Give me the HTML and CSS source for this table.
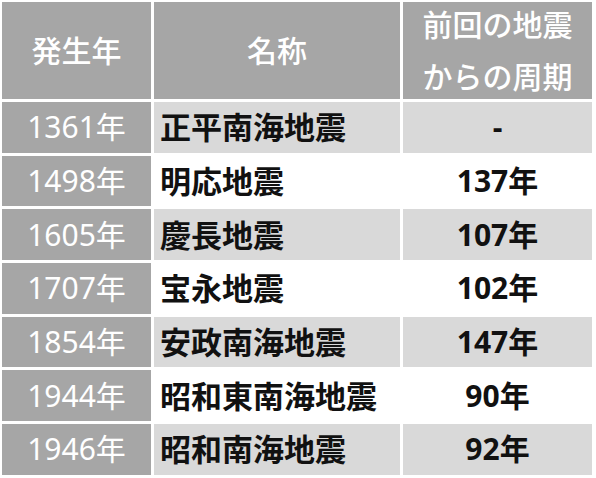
FILE: index.html
```html
<!DOCTYPE html>
<html lang="ja">
<head>
<meta charset="utf-8">
<title>南海地震</title>
<link rel="stylesheet" href="styles.css">
</head>
<body>
<div class="table">
  <div class="cell head">発生年</div>
  <div class="cell head">名称</div>
  <div class="cell head wrap">前回の地震<br>からの周期</div>

  <div class="cell year">1361年</div>
  <div class="cell name shade">正平南海地震</div>
  <div class="cell period shade">-</div>

  <div class="cell year">1498年</div>
  <div class="cell name">明応地震</div>
  <div class="cell period">137年</div>

  <div class="cell year">1605年</div>
  <div class="cell name shade">慶長地震</div>
  <div class="cell period shade">107年</div>

  <div class="cell year">1707年</div>
  <div class="cell name">宝永地震</div>
  <div class="cell period">102年</div>

  <div class="cell year">1854年</div>
  <div class="cell name shade">安政南海地震</div>
  <div class="cell period shade">147年</div>

  <div class="cell year">1944年</div>
  <div class="cell name">昭和東南海地震</div>
  <div class="cell period">90年</div>

  <div class="cell year">1946年</div>
  <div class="cell name shade">昭和南海地震</div>
  <div class="cell period shade">92年</div>
</div>
</body>
</html>
```

FILE: styles.css
```css
html, body {
  margin: 0;
  padding: 0;
  background: #ffffff;
}

body {
  width: 596px;
  height: 478px;
  overflow: hidden;
  font-family: "Open Sans", "Noto Sans CJK JP", sans-serif;
  font-size: 30px;
}

.table {
  display: grid;
  grid-template-columns: 149px 246px 189px;
  grid-template-rows: 97px repeat(7, 50.67px);
  column-gap: 3px;
  row-gap: 3px;
  padding: 2px 0 0 2px;
}

.cell {
  display: flex;
  align-items: center;
  justify-content: center;
  line-height: 52px;
  white-space: nowrap;
}

.head {
  background: #a6a6a6;
  color: #ffffff;
  font-weight: 500;
}

.wrap {
  text-align: center;
}

.year {
  background: #a6a6a6;
  color: #ffffff;
  font-family: "Noto Sans", "Noto Sans CJK JP", sans-serif;
  font-weight: 400;
}

.name {
  justify-content: flex-start;
  padding-left: 6px;
  color: #111111;
  font-weight: 700;
  font-size: 31px;
}

.period {
  color: #111111;
  font-weight: 700;
}

.shade {
  background: #d9d9d9;
}
```
